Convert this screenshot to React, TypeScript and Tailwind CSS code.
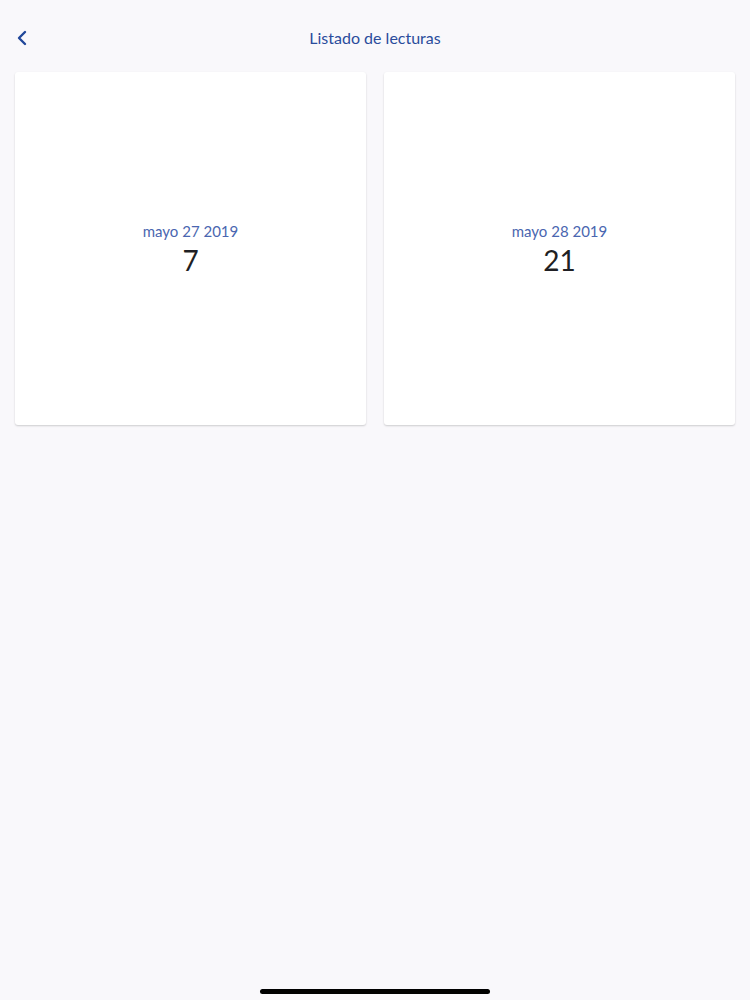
import { ChevronLeft } from "lucide-react";

type Reading = { date: string; value: number };

const READINGS: Reading[] = [
  { date: "mayo 27 2019", value: 7 },
  { date: "mayo 28 2019", value: 21 },
];

function ReadingCard({ reading }: { reading: Reading }) {
  return (
    <div className="flex h-[353px] flex-col items-center justify-center rounded-[3px] bg-white shadow-[0_1px_2px_rgba(0,0,0,0.18)]">
      <span className="text-[15px] leading-[18px] text-[#4a66b0]">{reading.date}</span>
      <span className="mt-[4px] text-[28px] leading-[32px] text-[#1f1f24]">{reading.value}</span>
    </div>
  );
}

export default function App() {
  return (
    <div
      className="relative flex h-[1000px] w-[750px] flex-col bg-[#f9f8fb]"
      style={{ fontFamily: "Lato, 'Open Sans', sans-serif" }}
    >
      {/* Nav bar */}
      <div className="relative mt-[21px] flex h-[34px] items-center justify-center">
        <button className="absolute left-[10px] top-[5px] text-[#21479a]">
          <ChevronLeft className="h-[24px] w-[24px]" strokeWidth={2.4} />
        </button>
        <span className="text-[16px] text-[#2a4c9c]">Listado de lecturas</span>
      </div>

      {/* Readings grid */}
      <div className="mt-[17px] grid grid-cols-2 gap-[18px] px-[15px]">
        {READINGS.map((r) => (
          <ReadingCard key={r.date} reading={r} />
        ))}
      </div>

      {/* Home indicator */}
      <div className="absolute bottom-[6px] left-[260px] h-[5px] w-[230px] rounded-full bg-black" />
    </div>
  );
}
